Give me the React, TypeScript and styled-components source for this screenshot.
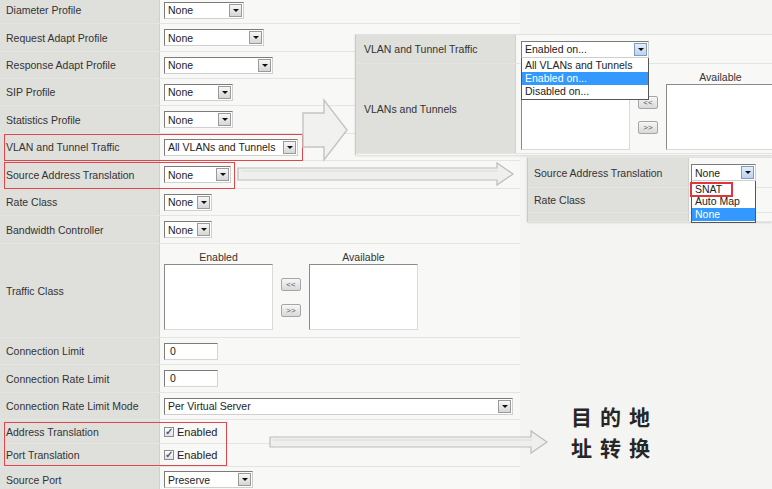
import React from 'react';
import styled, { createGlobalStyle } from 'styled-components';

const GlobalStyle = createGlobalStyle`
  body {
    margin: 0;
    background: #f4f4f2;
    font-family: "Liberation Sans", Arial, sans-serif;
  }
`;

const Page = styled.div`
  position: relative;
  width: 772px;
  height: 489px;
  overflow: hidden;
  background: #f4f4f2;
`;

const Form = styled.div`
  width: 520px;
  margin-top: -3px;
`;

const Row = styled.div<{ $h: number; $label?: number }>`
  display: grid;
  grid-template-columns: ${(p) => p.$label || 160}px 1fr;
  height: ${(p) => p.$h}px;
  box-sizing: border-box;
  border-bottom: 1px solid #e4e4e2;
`;

const Label = styled.div<{ $pad?: number }>`
  display: flex;
  align-items: center;
  padding-left: ${(p) => p.$pad || 6}px;
  background: #dfdfdb;
  border-right: 1px solid #cfcfcb;
  font-size: 10.5px;
  color: #333;
  white-space: nowrap;
  overflow: hidden;
`;

const Value = styled.div<{ $top?: boolean; $pad?: number }>`
  display: flex;
  align-items: ${(p) => (p.$top ? 'flex-start' : 'center')};
  padding-left: ${(p) => (p.$pad === undefined ? 4 : p.$pad)}px;
  padding-top: ${(p) => (p.$top ? 7 : 0)}px;
  background: #f8f8f6;
  box-sizing: border-box;
  overflow: visible;
`;

const SelectWrap = styled.div`
  position: relative;
`;

const SelectBox = styled.div<{ $w: number }>`
  display: flex;
  align-items: center;
  justify-content: space-between;
  width: ${(p) => p.$w}px;
  height: 17px;
  box-sizing: border-box;
  background: #fff;
  border: 1px solid;
  border-color: #7b7b7b #cfcfcf #cfcfcf #7b7b7b;
  padding: 0 1px 0 3px;
  font-size: 10.5px;
  color: #222;
  white-space: nowrap;
`;

const ArrowBtn = styled.span<{ $blue?: boolean }>`
  flex: none;
  width: 13px;
  height: 13px;
  box-sizing: border-box;
  border: 1px solid ${(p) => (p.$blue ? '#7f9db9' : '#9a9a9a')};
  background: ${(p) =>
    p.$blue ? 'linear-gradient(#e4eefa, #bcd2ee)' : 'linear-gradient(#f7f7f7, #d6d6d6)'};
  display: flex;
  align-items: center;
  justify-content: center;

  &::after {
    content: '';
    border-left: 3px solid transparent;
    border-right: 3px solid transparent;
    border-top: 3px solid #111;
  }
`;

const DropList = styled.div`
  position: absolute;
  top: 100%;
  left: 0;
  right: 0;
  z-index: 5;
  background: #fff;
  border: 1px solid #555;
  border-top: none;
  padding: 1px 0;
`;

const Option = styled.div<{ $active?: boolean }>`
  height: 13px;
  line-height: 13px;
  padding-left: 3px;
  font-size: 10.5px;
  color: ${(p) => (p.$active ? '#fff' : '#222')};
  background: ${(p) => (p.$active ? '#3399ff' : 'transparent')};
  white-space: nowrap;
`;

const Mark = styled.span`
  display: inline-block;
  margin-left: -5px;
  padding: 0 9px 0 3px;
  height: 11px;
  line-height: 11px;
  border: 2px solid #e2343c;
`;

const TextInput = styled.div`
  width: 54px;
  height: 17px;
  box-sizing: border-box;
  background: #fff;
  border: 1px solid;
  border-color: #7b7b7b #d4d4d4 #d4d4d4 #7b7b7b;
  padding-left: 5px;
  font-size: 10.5px;
  line-height: 15px;
  color: #222;
`;

const CheckLine = styled.label`
  display: flex;
  align-items: center;
  gap: 3px;
  font-size: 11px;
  color: #222;
`;

const CheckBox = styled.span`
  width: 10px;
  height: 10px;
  box-sizing: border-box;
  border: 1px solid #8c8c8c;
  background: linear-gradient(#fff, #e2e2e2);
  font-size: 10px;
  font-weight: 700;
  line-height: 8px;
  color: #3f5f93;
  text-align: center;
`;

const Picker = styled.div`
  display: flex;
  align-items: flex-start;
  gap: 8px;
`;

const PickCol = styled.div`
  display: flex;
  flex-direction: column;
  align-items: center;
`;

const PickHead = styled.div<{ $hidden?: boolean }>`
  height: 13px;
  line-height: 13px;
  font-size: 10.5px;
  color: #333;
  visibility: ${(p) => (p.$hidden ? 'hidden' : 'visible')};
`;

const ListBox = styled.div`
  width: 109px;
  height: 66px;
  box-sizing: border-box;
  background: #fff;
  border: 1px solid;
  border-color: #8a8a8a #dadada #dadada #8a8a8a;
`;

const MoveCol = styled.div<{ $top: number; $gap: number }>`
  display: flex;
  flex-direction: column;
  gap: ${(p) => p.$gap}px;
  margin-top: ${(p) => p.$top}px;
`;

const MoveBtn = styled.div`
  width: 20px;
  height: 13px;
  box-sizing: border-box;
  border: 1px solid #a6a6a6;
  border-radius: 2px;
  background: linear-gradient(#f6f6f6, #d9d9d9);
  font-size: 8px;
  line-height: 11px;
  text-align: center;
  color: #555;
`;

const Highlight = styled.div<{ $x: number; $y: number; $w: number; $h: number }>`
  position: absolute;
  left: ${(p) => p.$x}px;
  top: ${(p) => p.$y}px;
  width: ${(p) => p.$w}px;
  height: ${(p) => p.$h}px;
  box-sizing: border-box;
  border: 1px solid #e0464e;
  pointer-events: none;
`;

const Panel = styled.div<{ $x: number; $y: number; $w: number; $h: number }>`
  position: absolute;
  left: ${(p) => p.$x}px;
  top: ${(p) => p.$y}px;
  width: ${(p) => p.$w}px;
  height: ${(p) => p.$h}px;
  background: #f6f6f4;
  border-left: 1px solid #c9c9c6;
  border-top: 1px solid #e2e2e0;
  box-shadow: 0 1px 2px rgba(0, 0, 0, 0.12);
  box-sizing: border-box;
`;

const ArrowSvg = styled.svg<{ $x: number; $y: number }>`
  position: absolute;
  left: ${(p) => p.$x}px;
  top: ${(p) => p.$y}px;
  overflow: visible;
`;

const Note = styled.div`
  position: absolute;
  left: 571px;
  top: 401px;
  font-family: "Noto Sans CJK SC", "Noto Sans", sans-serif;
  font-size: 21px;
  font-weight: 700;
  line-height: 31px;
  letter-spacing: 8px;
  color: #262626;
`;

function Select({ w, value, blue }: { w: number; value: string; blue?: boolean }) {
  return (
    <SelectBox $w={w}>
      <span>{value}</span>
      <ArrowBtn $blue={blue} />
    </SelectBox>
  );
}

function ListPicker({ top, gap, hideHead }: { top: number; gap: number; hideHead?: boolean }) {
  return (
    <Picker>
      <PickCol>
        <PickHead $hidden={hideHead}>Enabled</PickHead>
        <ListBox />
      </PickCol>
      <MoveCol $top={top} $gap={gap}>
        <MoveBtn>&lt;&lt;</MoveBtn>
        <MoveBtn>&gt;&gt;</MoveBtn>
      </MoveCol>
      <PickCol>
        <PickHead>Available</PickHead>
        <ListBox />
      </PickCol>
    </Picker>
  );
}

function Check() {
  return (
    <CheckLine>
      <CheckBox>✓</CheckBox>
      Enabled
    </CheckLine>
  );
}

type FormRow = { label: string; h: number; control: React.ReactNode; top?: boolean };

const rows: FormRow[] = [
  { label: 'Diameter Profile', h: 27, control: <Select w={80} value="None" /> },
  { label: 'Request Adapt Profile', h: 28, control: <Select w={100} value="None" /> },
  { label: 'Response Adapt Profile', h: 27, control: <Select w={109} value="None" /> },
  { label: 'SIP Profile', h: 27, control: <Select w={69} value="None" /> },
  { label: 'Statistics Profile', h: 28, control: <Select w={69} value="None" /> },
  { label: 'VLAN and Tunnel Traffic', h: 27, control: <Select w={134} value="All VLANs and Tunnels" /> },
  { label: 'Source Address Translation', h: 28, control: <Select w={67} value="None" /> },
  { label: 'Rate Class', h: 27, control: <Select w={48} value="None" /> },
  { label: 'Bandwidth Controller', h: 28, control: <Select w={48} value="None" /> },
  { label: 'Traffic Class', h: 94, control: <ListPicker top={27} gap={13} />, top: true },
  { label: 'Connection Limit', h: 27, control: <TextInput>0</TextInput> },
  { label: 'Connection Rate Limit', h: 28, control: <TextInput>0</TextInput> },
  { label: 'Connection Rate Limit Mode', h: 27, control: <Select w={349} value="Per Virtual Server" /> },
  { label: 'Address Translation', h: 24, control: <Check /> },
  { label: 'Port Translation', h: 23, control: <Check /> },
  { label: 'Source Port', h: 26, control: <Select w={89} value="Preserve" /> },
];

export default function App() {
  return (
    <>
      <GlobalStyle />
      <Page>
        <Form>
          {rows.map((r) => (
            <Row key={r.label} $h={r.h}>
              <Label>{r.label}</Label>
              <Value $top={r.top}>{r.control}</Value>
            </Row>
          ))}
        </Form>

        <Highlight $x={4} $y={134} $w={299} $h={27} />
        <Highlight $x={4} $y={162} $w={231} $h={27} />
        <Highlight $x={4} $y={422} $w={223} $h={44} />

        <ArrowSvg $x={300} $y={96} width={52} height={68}>
          <path
            d="M3 17 H24 V4 L47 34 L24 64 V51 H3 Z"
            fill="#f1f1ef"
            stroke="#c4c4c2"
            strokeWidth={1.4}
          />
        </ArrowSvg>

        <ArrowSvg $x={236} $y={160} width={280} height={28}>
          <path
            d="M2 8 H261 V3 L277 14 L261 25 V20 H2 Z"
            fill="#efefed"
            stroke="#bdbdbb"
            strokeWidth={1.2}
          />
          <path d="M5 11 H262" stroke="#dadad8" strokeWidth={1} />
        </ArrowSvg>

        <ArrowSvg $x={268} $y={429} width={282} height={26}>
          <path
            d="M2 8 H263 V2 L279 13 L263 24 V18 H2 Z"
            fill="#efefed"
            stroke="#bdbdbb"
            strokeWidth={1.2}
          />
          <path d="M5 11 H264" stroke="#dadad8" strokeWidth={1} />
        </ArrowSvg>

        <Panel $x={355} $y={34} $w={417} $h={121}>
          <Row $h={29} $label={160}>
            <Label $pad={8}>VLAN and Tunnel Traffic</Label>
            <Value $pad={5}>
              <SelectWrap>
                <Select w={128} value="Enabled on..." blue />
                <DropList>
                  <Option>All VLANs and Tunnels</Option>
                  <Option $active>Enabled on...</Option>
                  <Option>Disabled on...</Option>
                </DropList>
              </SelectWrap>
            </Value>
          </Row>
          <Row $h={90} $label={160}>
            <Label $pad={8}>VLANs and Tunnels</Label>
            <Value $pad={5} $top>
              <ListPicker top={25} gap={12} hideHead />
            </Value>
          </Row>
        </Panel>

        <Panel $x={527} $y={157} $w={245} $h={65}>
          <Row $h={30} $label={161}>
            <Label>Source Address Translation</Label>
            <Value $pad={2}>
              <SelectWrap>
                <Select w={65} value="None" blue />
                <DropList>
                  <Option>
                    <Mark>SNAT</Mark>
                  </Option>
                  <Option>Auto Map</Option>
                  <Option $active>None</Option>
                </DropList>
              </SelectWrap>
            </Value>
          </Row>
          <Row $h={25} $label={161}>
            <Label>Rate Class</Label>
            <Value $pad={2} />
          </Row>
          <Row $h={9} $label={161}>
            <Label />
            <Value />
          </Row>
        </Panel>

        <Note>
          目的地
          <br />
          址转换
        </Note>
      </Page>
    </>
  );
}
